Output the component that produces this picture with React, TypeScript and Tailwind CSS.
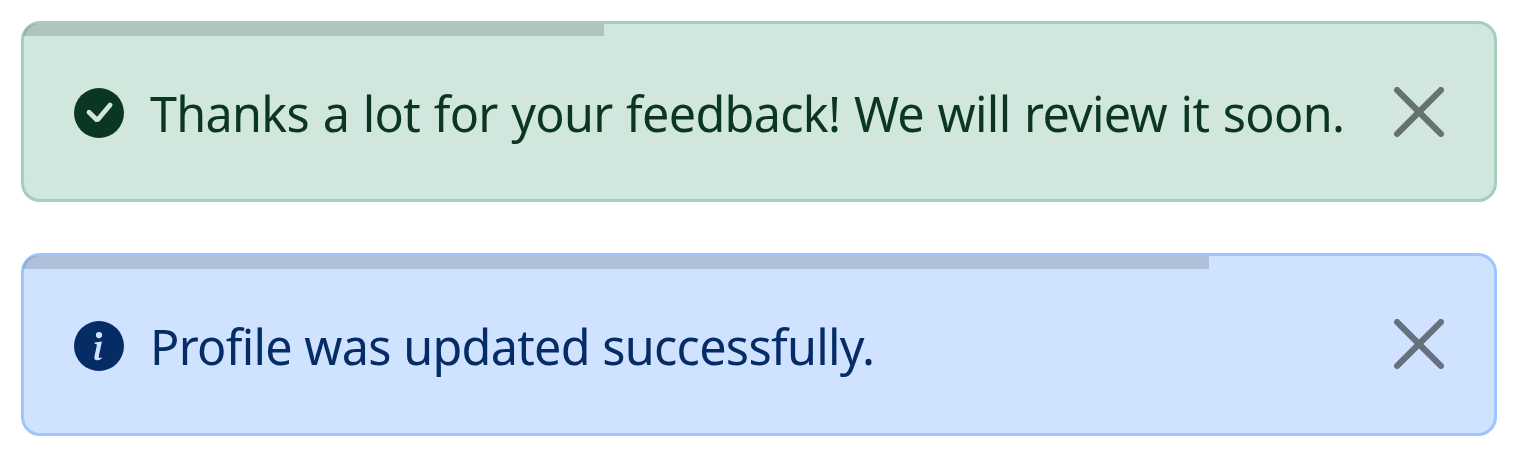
import type { ReactNode } from "react";
import { BsInfoCircleFill } from "react-icons/bs";

function CheckCircle() {
  return (
    <svg viewBox="0 0 50 50" className="mt-[2px] size-[50px] shrink-0" aria-hidden="true">
      <circle cx="25" cy="25" r="25" fill="#0a3622" />
      <path
        d="M15 24.3 L23.2 32.3 L36.1 17"
        fill="none"
        stroke="#d1e7dd"
        strokeWidth="4.8"
        strokeLinecap="round"
        strokeLinejoin="bevel"
      />
    </svg>
  );
}

function CloseIcon() {
  return (
    <svg viewBox="0 0 16 16" className="size-[50px]" fill="#000" aria-hidden="true">
      <path d="M.293.293a1 1 0 0 1 1.414 0L8 6.586 14.293.293a1 1 0 1 1 1.414 1.414L9.414 8l6.293 6.293a1 1 0 0 1-1.414 1.414L8 9.414l-6.293 6.293a1 1 0 0 1-1.414-1.414L6.586 8 .293 1.707a1 1 0 0 1 0-1.414z" />
    </svg>
  );
}

type AlertProps = {
  className: string;
  bar: string;
  close: string;
  icon: ReactNode;
  children: ReactNode;
};

function Alert({ className, bar, close, icon, children }: AlertProps) {
  return (
    <div
      role="alert"
      className={`relative flex w-[1476px] items-center rounded-[19px] border-[3px] pr-[50px] pl-[50px] ${className}`}
    >
      <div className="pointer-events-none absolute -inset-x-[1px] inset-y-0 overflow-hidden rounded-[14px]">
        <div className={`bg-black/15 ${bar}`} />
      </div>
      {icon}
      <p className="mt-[3px] ml-[26px] flex-1 text-[48.5px] leading-[70px] whitespace-nowrap">{children}</p>
      <button type="button" aria-label="Close" className={`opacity-50 ${close}`}>
        <CloseIcon />
      </button>
    </div>
  );
}

export default function App() {
  return (
    <main className="flex h-[457px] flex-col gap-[51px] bg-white pt-[21px] pl-[21px] font-['Noto_Sans',sans-serif]">
      <Alert
        className="h-[181px] border-[#a3cfbb] bg-[#d1e7dd] text-[#0a3622]"
        bar="h-[12px] w-[581px]"
        close=""
        icon={<CheckCircle />}
      >
        <span className="tracking-[-0.7px] [word-spacing:1.7px]">
          Thanks a lot for your feedback! We will review it soon.
        </span>
      </Alert>
      <Alert
        className="h-[183px] border-[#9ec5fe] bg-[#cfe2ff] text-[#052c65]"
        bar="h-[13px] w-[1186px]"
        close="mb-[2px]"
        icon={<BsInfoCircleFill className="mt-[2px] size-[50px] shrink-0" />}
      >
        <span className="tracking-[-0.7px] [word-spacing:0.5px]">Profile was updated successfully.</span>
      </Alert>
    </main>
  );
}
